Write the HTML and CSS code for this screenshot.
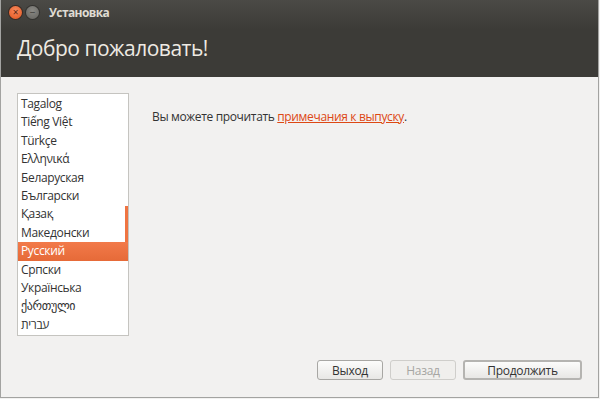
FILE: index.html
```html
<!DOCTYPE html>
<html lang="ru">
<head>
    <meta charset="UTF-8">
    <title>Установка</title>
    <link rel="stylesheet" href="styles.css">
</head>
<body>
    <div class="window">
        <div class="header">
            <div class="titlebar">
                <span class="btn-close">×</span>
                <span class="btn-min">−</span>
                <span class="title">Установка</span>
            </div>
            <h1>Добро пожаловать!</h1>
        </div>
        <div class="main">
            <div class="content">
                <div class="lang-list">
                    <div class="lang">Tagalog</div>
                    <div class="lang">Tiếng Việt</div>
                    <div class="lang">Türkçe</div>
                    <div class="lang">Ελληνικά</div>
                    <div class="lang">Беларуская</div>
                    <div class="lang">Български</div>
                    <div class="lang">Қазақ</div>
                    <div class="lang">Македонски</div>
                    <div class="lang selected">Русский</div>
                    <div class="lang">Српски</div>
                    <div class="lang">Українська</div>
                    <div class="lang">ქართული</div>
                    <div class="lang">עברית</div>
                    <div class="scroll-mark"></div>
                </div>
                <p class="notes">Вы можете прочитать <a href="#">примечания к выпуску</a>.</p>
            </div>
            <div class="buttons">
                <button class="button">Выход</button>
                <button class="button" disabled>Назад</button>
                <button class="button button-default">Продолжить</button>
            </div>
        </div>
    </div>
</body>
</html>
```

FILE: styles.css
```css
body {
    margin: 0;
    font-family: "Open Sans", "DejaVu Sans", sans-serif;
    font-size: 12px;
    letter-spacing: -0.35px;
    color: #333;
    background: #f2f1f0;
}
.window {
    width: 597px;
    height: 397px;
    display: flex;
    flex-direction: column;
    border: 1px solid #a3a3a1;
    border-top: none;
    background: #f2f1f0;
}
.header {
    height: 77px;
    background: linear-gradient(#4b4a46, #3c3b37 30px, #3c3b37);
    color: #dfdbd2;
}
.titlebar {
    height: 24px;
    display: flex;
    align-items: center;
    padding-left: 8px;
}
.btn-close, .btn-min {
    width: 13px;
    height: 13px;
    border-radius: 50%;
    font-size: 10px;
    line-height: 13px;
    text-align: center;
    margin-right: 2px;
    letter-spacing: 0;
}
.btn-close {
    background: radial-gradient(circle at 50% 35%, #f88a5e, #e3541c);
    color: #5a2410;
    box-shadow: 0 0 0 1px #3a2a24;
}
.btn-min {
    background: radial-gradient(circle at 50% 35%, #8a8984, #64635f);
    color: #3a3935;
    box-shadow: 0 0 0 1px #33322f;
    margin-left: 2px;
}
.title {
    margin-left: 8px;
    font-weight: bold;
    font-size: 12px;
    letter-spacing: -0.6px;
    color: #dfdbd2;
}
h1 {
    margin: 10px 0 0 16px;
    font-weight: normal;
    font-size: 21px;
    letter-spacing: -0.5px;
    color: #eeeae3;
}
.main {
    flex: 1;
    display: flex;
    flex-direction: column;
    padding: 16px 16px 16px 16px;
}
.content {
    flex: 1;
    display: flex;
}
.lang-list {
    position: relative;
    width: 110px;
    height: 240px;
    background: #fff;
    border: 1px solid #c5c4c0;
    padding-top: 1px;
}
.lang {
    height: 18.4px;
    line-height: 18.4px;
    padding-left: 3px;
}
.lang.selected {
    background: linear-gradient(#f27a4a, #e66a38);
    color: #fff;
}
.scroll-mark {
    position: absolute;
    right: 0;
    top: 112px;
    width: 3px;
    height: 36px;
    background: #ef7442;
}
.notes {
    margin: 15px 0 0 23px;
}
.notes a {
    color: #dd4814;
}
.buttons {
    display: flex;
    justify-content: flex-end;
    gap: 7px;
    margin-bottom: 1px;
}
.button {
    font-family: inherit;
    font-size: 12px;
    letter-spacing: -0.3px;
    height: 20px;
    width: 66px;
    padding: 0;
    border: 1px solid #a8a7a4;
    border-radius: 3px;
    background: linear-gradient(#fcfcfb, #e8e7e5);
    color: #333;
}
.button:disabled {
    border-color: #cfcecb;
    background: #f0efed;
    color: #a6a5a2;
}
.button-default {
    width: 119px;
    border: 2px solid #b5b4b1;
}
```
